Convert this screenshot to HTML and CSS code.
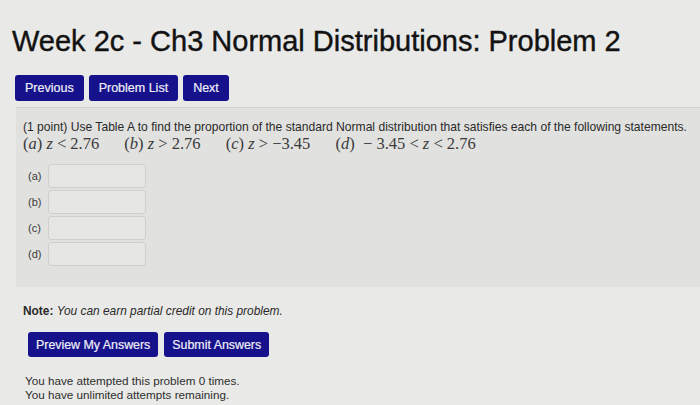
FILE: index.html
```html
<!DOCTYPE html>
<html lang="en">
<head>
<meta charset="utf-8">
<title>Week 2c - Ch3 Normal Distributions: Problem 2</title>
<link rel="stylesheet" href="styles.css">
</head>
<body>
<div class="page">
  <h1 class="title">Week 2c - Ch3 Normal Distributions: Problem 2</h1>
  <div class="nav">
    <a class="btn nav-btn">Previous</a>
    <a class="btn nav-btn">Problem List</a>
    <a class="btn nav-btn">Next</a>
  </div>
  <div class="problem">
    <p class="statement">(1 point) Use Table A to find the proportion of the standard Normal distribution that satisfies each of the following statements.</p>
    <p class="math">
      <span class="seg">(<i>a</i>) <i>z</i> &lt; 2.76</span>
      <span class="seg">(<i>b</i>) <i>z</i> &gt; 2.76</span>
      <span class="seg">(<i>c</i>) <i>z</i> &gt; −3.45</span>
      <span class="seg">(<i>d</i>) &nbsp;− 3.45 &lt; <i>z</i> &lt; 2.76</span>
    </p>
    <div class="answers">
      <div class="row"><span class="lbl">(a)</span><span class="field"></span></div>
      <div class="row"><span class="lbl">(b)</span><span class="field"></span></div>
      <div class="row"><span class="lbl">(c)</span><span class="field"></span></div>
      <div class="row"><span class="lbl">(d)</span><span class="field"></span></div>
    </div>
  </div>
  <div class="footer">
    <p class="note"><b>Note:</b> <i>You can earn partial credit on this problem.</i></p>
    <div class="actions">
      <a class="btn act-btn">Preview My Answers</a>
      <a class="btn act-btn">Submit Answers</a>
    </div>
    <p class="attempts">You have attempted this problem 0 times.<br>You have unlimited attempts remaining.</p>
  </div>
</div>
</body>
</html>
```
FILE: styles.css
```css
html, body {
  margin: 0;
  padding: 0;
}
body {
  background: #e9e9e7;
  font-family: "Liberation Sans", Arial, sans-serif;
  color: #2a2a2a;
  width: 700px;
  height: 405px;
  overflow: hidden;
}
.page {
  padding-left: 12px;
}
.title {
  margin: 25px 0 0 0;
  font-size: 29px;
  line-height: 32px;
  font-weight: normal;
  color: #121212;
  -webkit-text-stroke: 0.4px #121212;
  white-space: nowrap;
}
.nav {
  display: flex;
  gap: 5px;
  margin: 18px 0 0 3px;
}
.btn {
  display: inline-flex;
  align-items: center;
  justify-content: center;
  background: #16128c;
  color: #eeeef6;
  border-radius: 3px;
  box-sizing: border-box;
  white-space: nowrap;
  -webkit-text-stroke: 0.2px #eeeef6;
}
.nav-btn {
  height: 26px;
  padding: 0 10px;
  font-size: 12.5px;
}
.problem {
  margin: 6px 0 0 4px;
  background: #e1e1df;
  border-top: 1px solid #d3d3d1;
  padding: 11px 0 21px 7px;
}
.statement {
  margin: 0;
  font-size: 12.1px;
  line-height: 16px;
  color: #2a2a2a;
  white-space: nowrap;
}
.math {
  margin: 0;
  font-family: "Liberation Serif", "Times New Roman", serif;
  font-size: 16.5px;
  line-height: 18px;
  color: #3a3a3a;
  white-space: nowrap;
}
.math .seg {
  margin-right: 21px;
}
.answers {
  margin: 11px 0 0 5px;
  display: flex;
  flex-direction: column;
  gap: 2px;
}
.row {
  display: flex;
  align-items: center;
  height: 24px;
}
.lbl {
  width: 20px;
  font-size: 11px;
  color: #3a3a3a;
}
.field {
  width: 98px;
  height: 24px;
  box-sizing: border-box;
  border: 1px solid #cfcfcd;
  border-radius: 3px;
  background: #e6e6e4;
}
.footer {
  padding-left: 11px;
  margin-top: 17px;
}
.note {
  margin: 0;
  font-size: 11.9px;
  line-height: 14px;
  color: #2a2a2a;
}
.actions {
  display: flex;
  gap: 6px;
  margin: 14px 0 0 5px;
}
.act-btn {
  height: 25px;
  padding: 0 8px;
  font-size: 12.4px;
}
.attempts {
  margin: 17px 0 0 2px;
  font-size: 11.7px;
  line-height: 14px;
  color: #2e2e2e;
}
```
